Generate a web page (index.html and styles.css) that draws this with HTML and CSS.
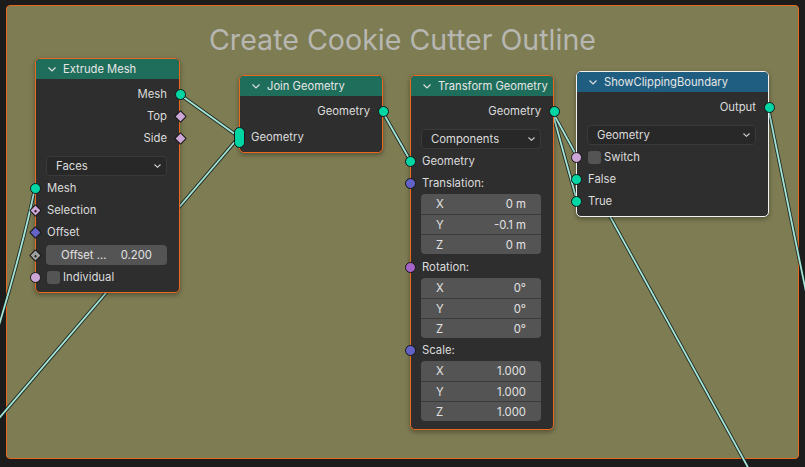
FILE: index.html
```html
<!DOCTYPE html>
<html>
<head>
<meta charset="utf-8">
<link rel="stylesheet" href="styles.css">
</head>
<body>
<div class="canvas">
  <div class="frame">
    <div class="frame-title">Create Cookie Cutter Outline</div>
  </div>

  <svg class="wires" width="805" height="467" viewBox="0 0 805 467">
    <g class="wire-outline">
      <path d="M179 94 L239 137"/>
      <path d="M-5 423 L239 137"/>
      <path d="M35 188 Q22 250 -4 335"/>
      <path d="M382 111 L410 160"/>
      <path d="M552 111 L577 201"/>
      <path d="M552 111 L750 471"/>
      <path d="M768 107 L806 292"/>
    </g>
    <g class="wire-core">
      <path d="M179 94 L239 137"/>
      <path d="M-5 423 L239 137"/>
      <path d="M35 188 Q22 250 -4 335"/>
      <path d="M382 111 L410 160"/>
      <path d="M552 111 L577 201"/>
      <path d="M552 111 L750 471"/>
      <path d="M768 107 L806 292"/>
    </g>
  </svg>

  <!-- Extrude Mesh -->
  <div class="node selected n-extrude">
    <div class="node-header green">
      <svg class="chev" width="8" height="5" viewBox="0 0 8 5"><polyline points="0.5,0.5 4,4 7.5,0.5"/></svg>
      <span>Extrude Mesh</span>
    </div>
    <div class="node-body">
      <div class="row out">Mesh<span class="sock geo"></span></div>
      <div class="row out">Top<span class="sock diamond bool"></span></div>
      <div class="row out">Side<span class="sock diamond bool"></span></div>
      <div class="dd-row"><div class="dropdown"><span>Faces</span><svg class="ddchev" width="7" height="4" viewBox="0 0 7 4"><polyline points="0.5,0.5 3.5,3.3 6.5,0.5"/></svg></div></div>
      <div class="row in"><span class="sock geo"></span>Mesh</div>
      <div class="row in"><span class="sock diamond bool dot"></span>Selection</div>
      <div class="row in"><span class="sock diamond vec"></span>Offset</div>
      <div class="field-row"><span class="sock diamond float dot"></span><div class="num single"><span>Offset ...</span><span>0.200</span></div></div>
      <div class="row in"><span class="sock bool"></span><span class="check"></span>Individual</div>
    </div>
  </div>

  <!-- Join Geometry -->
  <div class="node selected n-join">
    <div class="node-header green">
      <svg class="chev" width="8" height="5" viewBox="0 0 8 5"><polyline points="0.5,0.5 4,4 7.5,0.5"/></svg>
      <span>Join Geometry</span>
    </div>
    <div class="node-body">
      <div class="row out">Geometry<span class="sock geo"></span></div>
      <div class="row in multi-row"><span class="sock geo multi"></span>Geometry</div>
    </div>
  </div>

  <!-- Transform Geometry -->
  <div class="node selected n-transform">
    <div class="node-header green">
      <svg class="chev" width="8" height="5" viewBox="0 0 8 5"><polyline points="0.5,0.5 4,4 7.5,0.5"/></svg>
      <span>Transform Geometry</span>
    </div>
    <div class="node-body tb">
      <div class="row out">Geometry<span class="sock geo"></span></div>
      <div class="dd-row"><div class="dropdown"><span>Components</span><svg class="ddchev" width="7" height="4" viewBox="0 0 7 4"><polyline points="0.5,0.5 3.5,3.3 6.5,0.5"/></svg></div></div>
      <div class="row in"><span class="sock geo"></span>Geometry</div>
      <div class="row in"><span class="sock vec"></span>Translation:</div>
      <div class="vecblock">
        <div class="num"><span>X</span><span>0 m</span></div>
        <div class="num"><span>Y</span><span>-0.1 m</span></div>
        <div class="num"><span>Z</span><span>0 m</span></div>
      </div>
      <div class="row in gap2"><span class="sock rot"></span>Rotation:</div>
      <div class="vecblock">
        <div class="num"><span>X</span><span>0°</span></div>
        <div class="num"><span>Y</span><span>0°</span></div>
        <div class="num"><span>Z</span><span>0°</span></div>
      </div>
      <div class="row in gap1"><span class="sock vec"></span>Scale:</div>
      <div class="vecblock">
        <div class="num"><span>X</span><span>1.000</span></div>
        <div class="num"><span>Y</span><span>1.000</span></div>
        <div class="num"><span>Z</span><span>1.000</span></div>
      </div>
    </div>
  </div>

  <!-- ShowClippingBoundary -->
  <div class="node active n-clip">
    <div class="node-header blue">
      <svg class="chev" width="8" height="5" viewBox="0 0 8 5"><polyline points="0.5,0.5 4,4 7.5,0.5"/></svg>
      <span>ShowClippingBoundary</span>
    </div>
    <div class="node-body">
      <div class="row out">Output<span class="sock geo"></span></div>
      <div class="dd-row"><div class="dropdown"><span>Geometry</span><svg class="ddchev" width="7" height="4" viewBox="0 0 7 4"><polyline points="0.5,0.5 3.5,3.3 6.5,0.5"/></svg></div></div>
      <div class="row in"><span class="sock bool"></span><span class="check"></span>Switch</div>
      <div class="row in"><span class="sock geo"></span>False</div>
      <div class="row in"><span class="sock geo"></span>True</div>
    </div>
  </div>
</div>
</body>
</html>
```

FILE: styles.css
```css
* { box-sizing: border-box; }
html, body { margin: 0; padding: 0; }
body {
  background: #1c1c1c;
  font-family: Inter, "Noto Sans", "DejaVu Sans", sans-serif;
  font-size: 11.3px;
  color: #dcdcdc;
  overflow: hidden;
}
.canvas {
  position: relative;
  width: 805px;
  height: 467px;
  overflow: hidden;
  padding: 5px 6px 0 6px;
}
.frame {
  height: 454px;
  background: #7e7c53;
  border: 1px solid #e4671c;
  border-radius: 4px;
  padding-top: 17px;
}
.frame-title {
  text-align: center;
  font-size: 28.6px;
  line-height: 34px;
  color: #b7b7b1;
}
.wires {
  position: absolute;
  left: 0;
  top: 0;
}
.wires path { fill: none; stroke-linecap: round; }
.wire-outline path { stroke: rgba(20, 30, 28, 0.85); stroke-width: 3.6; }
.wire-core path { stroke: #a2e5d8; stroke-width: 1.8; }

.node {
  position: absolute;
  background: #2e2e2e;
  border: 1px solid #141414;
  border-radius: 5px;
  box-shadow: 0 2px 5px rgba(0, 0, 0, 0.35);
}
.node.selected { border-color: #ec681c; }
.node.active { border-color: #f2f2f2; }
.n-extrude { left: 35px; top: 58px; width: 145px; }
.n-join { left: 239px; top: 75px; width: 144px; }
.n-transform { left: 410px; top: 75px; width: 144px; }
.n-clip { left: 576px; top: 71px; width: 193px; }

.node-header {
  height: 20px;
  display: flex;
  align-items: center;
  gap: 7px;
  padding-left: 12px;
  border-radius: 4px 4px 0 0;
  color: #e6e6e6;
  font-size: 11.2px;
  white-space: nowrap;
  overflow: hidden;
}
.node-header.green { background: #1e6e5b; }
.node-header.blue { background: #1f5e80; }
.chev { flex: none; }
.chev polyline { fill: none; stroke: #dedede; stroke-width: 1.2; }

.node-body { padding: 4px 0 4px 0; }
.node-body.tb { padding-bottom: 8px; }

.row {
  position: relative;
  height: 22px;
  display: flex;
  align-items: center;
  padding: 0 12px 0 11px;
  white-space: nowrap;
}
.row.out { justify-content: flex-end; }
.row.multi-row { margin-top: 4px; }
.row.gap2 { margin-top: 2px; }
.row.gap1 { margin-top: 1px; }

.sock {
  position: absolute;
  top: 50%;
  width: 11px;
  height: 11px;
  margin-top: -5.5px;
  border-radius: 50%;
  border: 1px solid #151515;
}
.row.in .sock, .field-row .sock { left: -6.5px; }
.row.out .sock { right: -6.5px; }
.sock.geo { background: #00d6a3; }
.sock.bool { background: #cca6d6; }
.sock.vec { background: #6363c7; }
.sock.rot { background: #a663c7; }
.sock.float { background: #a1a1a1; }
.sock.diamond {
  width: 9px;
  height: 9px;
  margin-top: -4.5px;
  border-radius: 1px;
  transform: rotate(45deg);
}
.row.in .sock.diamond, .field-row .sock.diamond { left: -5.5px; }
.row.out .sock.diamond { right: -5.5px; }
.sock.dot::after {
  content: "";
  position: absolute;
  left: 50%;
  top: 50%;
  width: 2px;
  height: 2px;
  margin: -1px 0 0 -1px;
  background: #1a1a1a;
}
.sock.multi {
  width: 11px;
  height: 21px;
  margin-top: -10.5px;
  border-radius: 6px;
}
.row.in .sock.multi { left: -6.5px; }

.dd-row {
  height: 22px;
  margin-top: 6px;
  display: flex;
  align-items: center;
  padding: 0 12px 0 10px;
}
.dropdown {
  flex: 1;
  height: 20px;
  display: flex;
  align-items: center;
  justify-content: space-between;
  padding: 0 5px 0 9px;
  background: #282828;
  border: 1px solid #3a3a3a;
  border-radius: 4px;
  color: #dcdcdc;
}
.ddchev polyline { fill: none; stroke: #d0d0d0; stroke-width: 1.1; }

.field-row {
  position: relative;
  height: 22px;
  margin-top: 1px;
  display: flex;
  align-items: center;
  padding: 0 12px 0 10px;
}
.num {
  height: 20px;
  display: flex;
  align-items: center;
  justify-content: space-between;
  padding: 0 15px 0 15px;
  background: #545454;
  color: #e2e2e2;
}
.num.single {
  flex: 1;
  border-radius: 4px;
}
.vecblock {
  margin: 0 12px 0 10px;
  border-radius: 4px;
  overflow: hidden;
}
.vecblock .num + .num { border-top: 1px solid #3b3b3b; }

.check {
  width: 13px;
  height: 13px;
  background: #545454;
  border-radius: 3px;
  margin-right: 3px;
  flex: none;
}
```
